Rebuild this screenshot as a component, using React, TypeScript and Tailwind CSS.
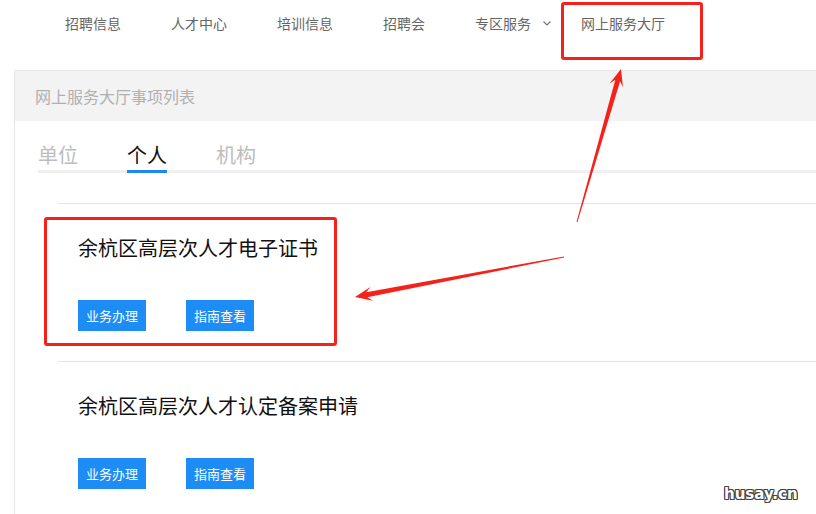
import React from 'react';

const font = { fontFamily: '"Noto Sans CJK SC", "Noto Sans", sans-serif' };

const navItems = ['招聘信息', '人才中心', '培训信息', '招聘会'];

const services = ['余杭区高层次人才电子证书', '余杭区高层次人才认定备案申请'];

function ServiceItem({ title }: { title: string }) {
  return (
    <div className="border-t border-[#e5e5e5] pt-[29px] pb-[30px] pl-5">
      <p className="text-[20px] leading-[30px] text-[#111]">{title}</p>
      <div className="mt-[37px] flex gap-10">
        <button className="w-[68px] h-[31px] bg-[#1e8cf5] text-white text-[13px] leading-[31px] text-center">业务办理</button>
        <button className="w-[68px] h-[31px] bg-[#1e8cf5] text-white text-[13px] leading-[31px] text-center">指南查看</button>
      </div>
    </div>
  );
}

export default function App() {
  return (
    <div className="relative w-[816px] h-[514px] overflow-hidden bg-white" style={font}>
      {/* top nav */}
      <nav className="flex h-[46px] items-center pl-[65px] gap-[50px] text-[14px] leading-5 text-[#666]">
        {navItems.map(n => (
          <span key={n}>{n}</span>
        ))}
        <span className="flex items-center -mr-5">
          专区服务
          <svg className="ml-3 w-[8px] h-[5px] mt-[1px]" viewBox="0 0 8 5" fill="none">
            <path d="M0.5 0.5L4 4L7.5 0.5" stroke="#777" strokeWidth="1.2" />
          </svg>
        </span>
        <span>网上服务大厅</span>
      </nav>

      {/* panel */}
      <div className="mt-[24px] ml-[14px] border-l border-t border-[#e6e6e6]">
        <div className="h-[50px] bg-[#f3f3f3] flex items-center pl-5 text-[16px] text-[#b0b0b0]">网上服务大厅事项列表</div>

        <div className="pl-[23px] pt-5">
          <div className="flex gap-[49px] border-b-[3px] border-[#f0f0f0] text-[20px] leading-[28px]">
            <span className="text-[#bdbdbd] pb-[1px]">单位</span>
            <span className="text-[#111] pb-[1px] -mb-[3px] border-b-[3px] border-[#1e88f0]">个人</span>
            <span className="text-[#bdbdbd] pb-[1px]">机构</span>
          </div>
        </div>

        <div className="ml-[43px] mt-[30px]">
          {services.map(s => (
            <ServiceItem key={s} title={s} />
          ))}
        </div>
      </div>

      {/* annotation boxes */}
      <div className="absolute left-[561px] top-[2px] w-[142px] h-[58px] border-[3px] border-[#f5221b] rounded-[3px]" />
      <div className="absolute left-[44px] top-[217px] w-[293px] h-[129px] border-[3px] border-[#f5221b] rounded-[3px]" />

      {/* annotation arrows */}
      <svg className="absolute left-0 top-0 w-[816px] h-[514px] pointer-events-none" viewBox="0 0 816 514">
        <polygon
          fill="#f5221b"
          points="577.5,222.1 620.1,81.2 623,87.2 621,69 609.6,83.4 615.3,79.8 576.5,221.9"
        />
        <polygon
          fill="#f5221b"
          points="563.9,256.5 366.3,292.2 370.4,286.9 355,297 373,300.7 367.3,297.2 564.1,257.5"
        />
      </svg>

      {/* watermark */}
      <span
        className="absolute left-[724px] top-[483px] text-[15px] font-bold text-white [text-shadow:1px_0_#444,-1px_0_#444,0_1px_#444,0_-1px_#444,1px_1px_#444,-1px_-1px_#444,1px_-1px_#444,-1px_1px_#444]"
        style={{ fontFamily: '"DejaVu Sans", sans-serif' }}
      >
        husay.cn
      </span>
    </div>
  );
}
